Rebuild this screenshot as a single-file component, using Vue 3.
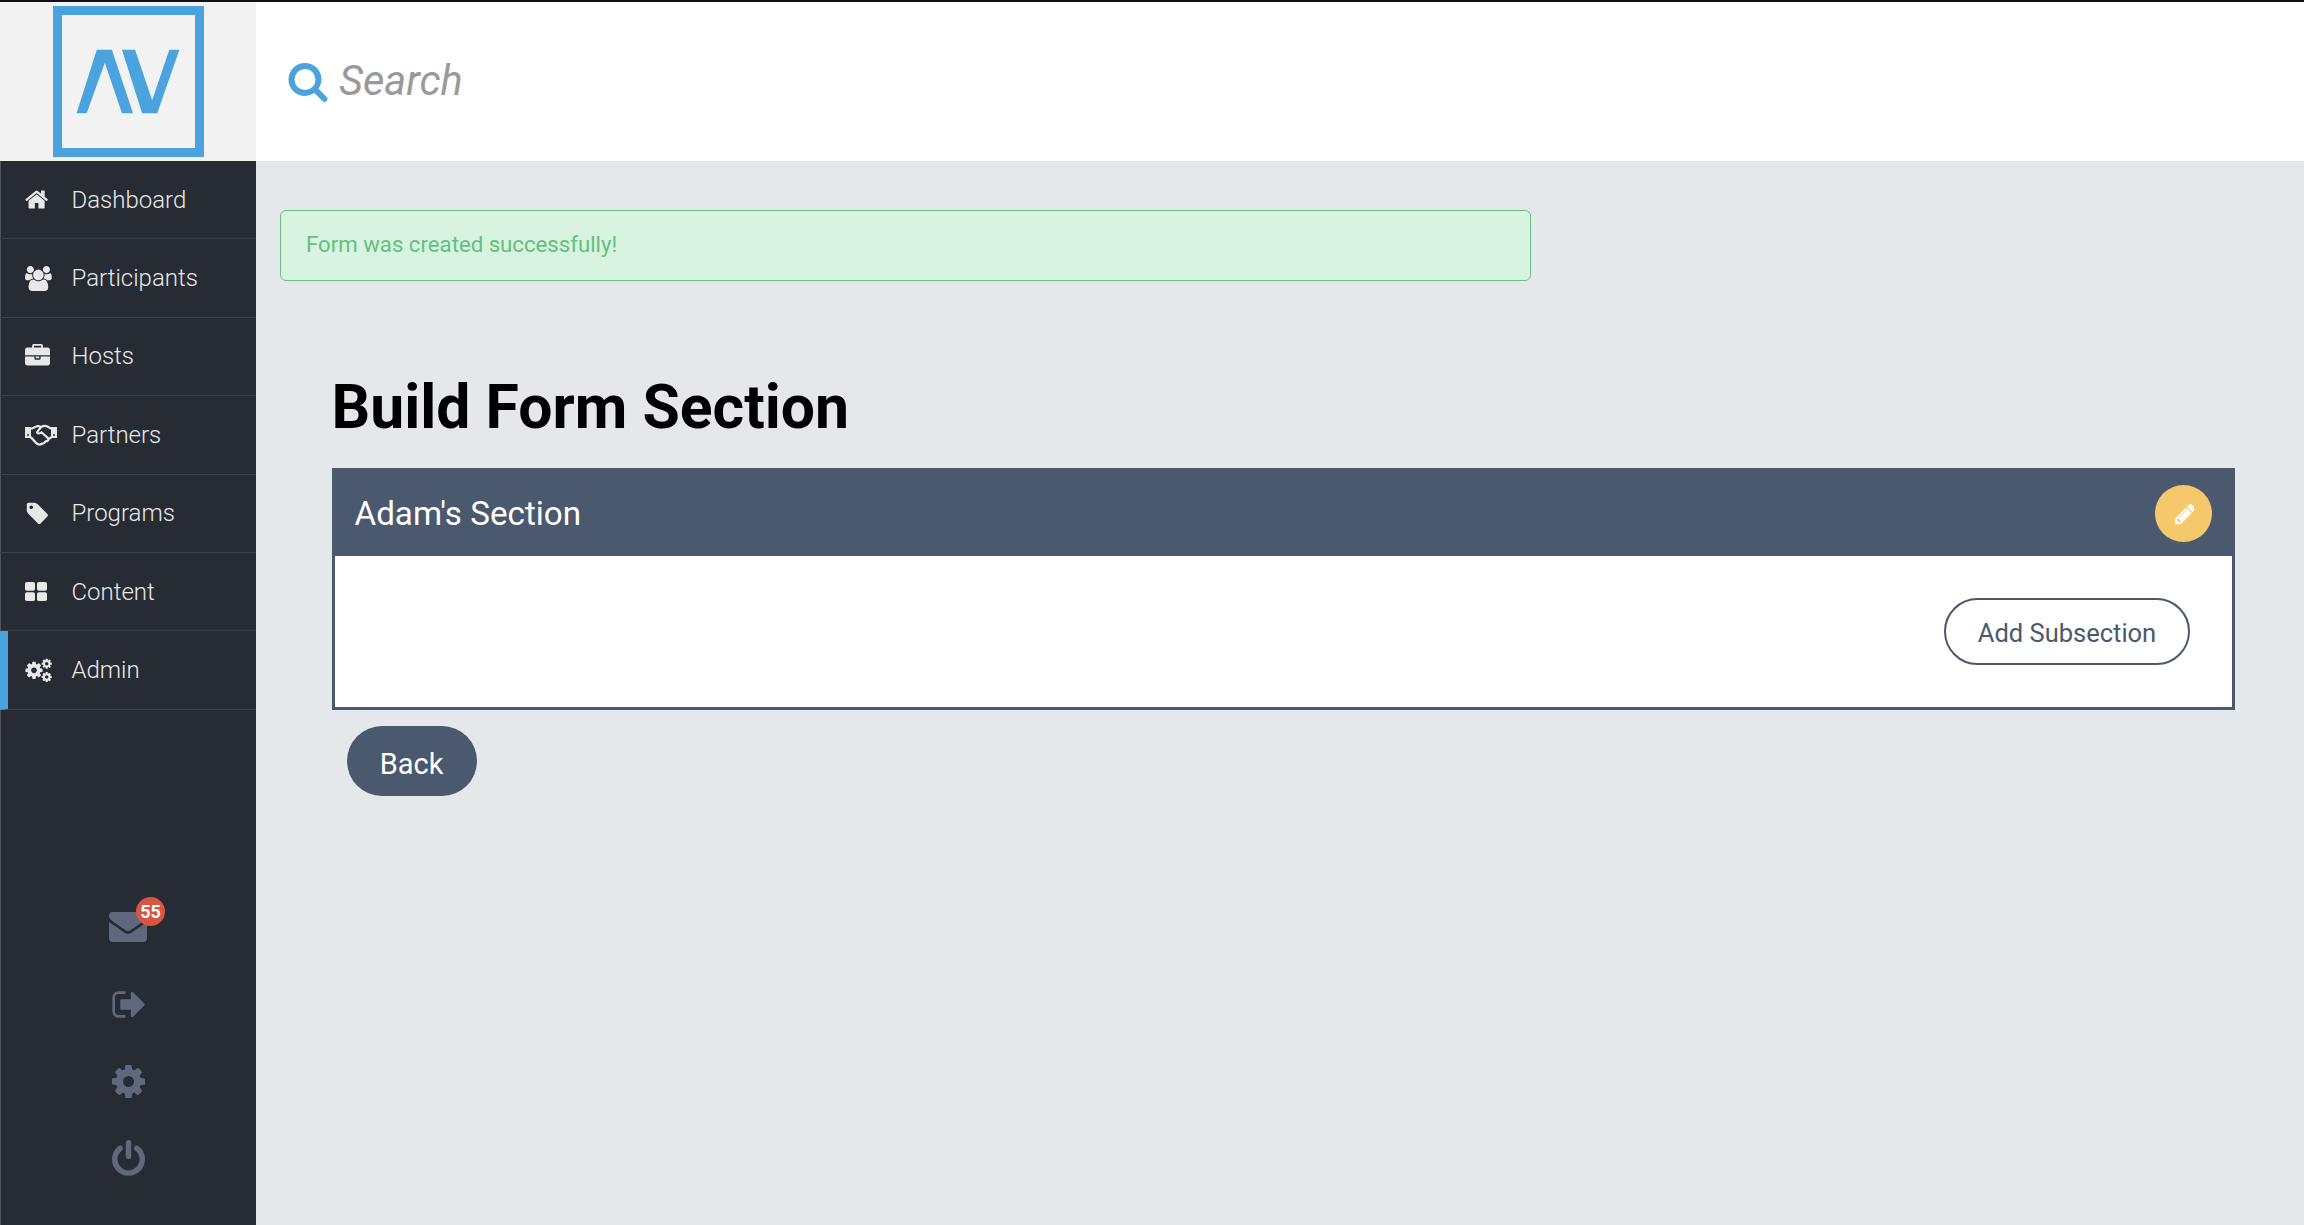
<script setup>
const icon = {
  home: { w: 1792, d: 'M1408 992v480q0 26-19 45t-45 19h-384v-384h-256v384h-384q-26 0-45-19t-19-45v-480q0-1 .5-3t.5-3l575-474 575 474q1 2 1 6zm223-69l-62 74q-8 9-21 11h-3q-13 0-21-7l-692-577-692 577q-12 8-24 7-13-2-21-11l-62-74q-8-10-7-23.5t11-21.5l719-599q32-26 76-26t76 26l244 204v-195q0-14 9-23t23-9h192q14 0 23 9t9 23v408l219 182q10 8 11 21.5t-7 23.5z' },
  users: { w: 1920, d: 'M593 896q-162 5-265 128h-134q-82 0-138-40.5t-56-118.5q0-353 124-353 6 0 43.5 21t97.5 42.5 119 21.5q67 0 133-23-5 37-5 66 0 139 81 256zm1071 637q0 120-73 189.5t-194 69.5h-874q-121 0-194-69.5t-73-189.5q0-53 3.5-103.5t14-109 26.5-108.5 43-97.5 62-81 85.5-53.5 111.5-20q10 0 43 21.5t73 48 107 48 135 21.5 135-21.5 107-48 73-48 43-21.5q61 0 111.5 20t85.5 53.5 62 81 43 97.5 26.5 108.5 14 109 3.5 103.5zm-1024-1277q0 106-75 181t-181 75-181-75-75-181 75-181 181-75 181 75 75 181zm704 384q0 159-112.5 271.5t-271.5 112.5-271.5-112.5-112.5-271.5 112.5-271.5 271.5-112.5 271.5 112.5 112.5 271.5zm576 225q0 78-56 118.5t-138 40.5h-134q-103-123-265-128 81-117 81-256 0-29-5-66 66 23 133 23 59 0 119-21.5t97.5-42.5 43.5-21q124 0 124 353zm-128-609q0 106-75 181t-181 75-181-75-75-181 75-181 181-75 181 75 75 181z' },
  briefcase: { w: 1792, d: 'M640 256h512v-128h-512v128zm1152 640v480q0 66-47 113t-113 47h-1472q-66 0-113-47t-47-113v-480h672v160q0 26 19 45t45 19h320q26 0 45-19t19-45v-160h672zm-768 0v128h-256v-128h256zm768-480v384h-1792v-384q0-66 47-113t113-47h352v-160q0-40 28-68t68-28h576q40 0 68 28t28 68v160h352q66 0 113 47t47 113z' },
  tag: { w: 1792, d: 'M576 448q0-53-37.5-90.5t-90.5-37.5-90.5 37.5-37.5 90.5 37.5 90.5 90.5 37.5 90.5-37.5 37.5-90.5zm1067 576q0 53-37 90l-491 492q-39 37-91 37-53 0-90-37l-715-716q-38-37-64.5-101t-26.5-117v-416q0-52 38-90t90-38h416q53 0 117 26.5t102 64.5l715 714q37 39 37 91z' }
}
const cog = 'M1152 896q0-106-75-181t-181-75-181 75-75 181 75 181 181 75 181-75 75-181zm512-109v222q0 12-8 23t-20 13l-185 28q-19 54-39 91 35 50 107 138 10 12 10 25t-9 23q-27 37-99 108t-94 71q-12 0-26-9l-138-108q-44 23-91 38-16 136-29 186-7 28-36 28h-222q-14 0-24.5-8.5t-11.5-21.5l-28-184q-49-16-90-37l-141 107q-10 9-25 9-14 0-25-11-126-114-165-168-7-10-7-23 0-12 8-23 15-21 51-66.5t54-70.5q-27-50-41-99l-183-27q-13-2-21-12.5t-8-23.5v-222q0-12 8-23t19-13l186-28q14-46 39-92-40-57-107-138-10-12-10-24 0-10 9-23 26-36 98.5-107.5t94.5-71.5q13 0 26 10l138 107q44-23 91-38 16-136 29-186 7-28 36-28h222q14 0 24.5 8.5t11.5 21.5l28 184q49 16 90 37l142-107q9-9 24-9 13 0 25 10 129 119 165 170 7 8 7 22 0 12-8 23-15 21-51 66.5t-54 70.5q26 50 41 98l183 28q13 2 21 12.5t8 23.5z'
const nav = [
  { label: 'Dashboard', icon: 'home' },
  { label: 'Participants', icon: 'users' },
  { label: 'Hosts', icon: 'briefcase' },
  { label: 'Partners', icon: 'hands' },
  { label: 'Programs', icon: 'tag' },
  { label: 'Content', icon: 'grid' },
  { label: 'Admin', icon: 'cogs', active: true }
]
</script>

<template>
  <div class="page">
    <aside class="side">
      <div class="logo">
        <div class="logo-box">
          <svg viewBox="0 0 132 132" class="logo-av">
            <path d="M14.5 97.5 34.5 34.5H49.5L70.5 97.5H59.5L42.5 47.5 24.5 97.5Z" />
            <path d="M59.5 34.5H72.5L89.5 84.5 106.5 34.5H116.5L94.5 97.5H79.5Z" />
          </svg>
        </div>
      </div>
      <nav class="nav">
        <a v-for="n in nav" :key="n.label" class="nav-row" :class="{ active: n.active }">
          <span class="nav-icon">
            <svg v-if="icon[n.icon]" class="ni" :viewBox="`0 0 ${icon[n.icon].w} 1792`"><path :d="icon[n.icon].d" /></svg>
            <svg v-else-if="n.icon === 'hands'" class="ni hands" viewBox="0 0 32 22">
              <path d="M0 3H6V14H0ZM26 3H32V14H26Z" />
              <path class="line" d="M6 4.5C8 4.5 9.5 2.8 12 2.2 14 1.8 15.5 2.6 16 3.2 18 1.8 21 1.8 23 2.8 24 3.4 25 4.5 26 4.5M6 13.5C8 15 10 18.5 12.5 20 14.5 21.2 16 20.5 17 19.6 19 19.8 20 18.5 20.6 17.4 22.4 17.2 23.6 16 23.8 14.8L26 13.5M16 3.2C14 5.5 12.5 7 12 8.4 13 10 15 9.6 16.5 8.2L23.5 14.6" />
              <circle class="dot" cx="3" cy="11" r="1" />
              <circle class="dot" cx="29" cy="11" r="1" />
            </svg>
            <svg v-else-if="n.icon === 'grid'" class="ni grid" viewBox="0 0 22 19">
              <rect width="10" height="8.7" rx="1.8" />
              <rect x="12" width="10" height="8.7" rx="1.8" />
              <rect y="10.3" width="10" height="8.7" rx="1.8" />
              <rect x="12" y="10.3" width="10" height="8.7" rx="1.8" />
            </svg>
            <svg v-else class="ni cogs" viewBox="0 0 28 26">
              <path :d="cog" transform="translate(10 13.3) scale(.0112) translate(-896 -896)" />
              <path :d="cog" transform="translate(22.7 6.7) scale(.0066) translate(-896 -896)" />
              <path :d="cog" transform="translate(22.7 20) scale(.0066) translate(-896 -896)" />
            </svg>
          </span>
          <span>{{ n.label }}</span>
        </a>
      </nav>
      <div class="tools">
        <div class="tool mail">
          <svg class="ti t-mail" viewBox="0 64 1792 1792"><path d="M1792 710v794q0 66-47 113t-113 47h-1472q-66 0-113-47t-47-113v-794q44 49 101 87 362 246 497 345 57 42 92.5 65.5t94.5 48 110 24.5h2q51 0 110-24.5t94.5-48 92.5-65.5q170-123 498-345 57-39 100-87zm0-294q0 79-49 151t-122 123q-376 261-468 325-10 7-42.5 30.5t-54 38-52 32.5-57.5 27-50 9h-2q-23 0-50-9t-57.5-27-52-32.5-54-38-42.5-30.5q-91-64-262-182.5t-205-142.5q-62-42-117-115.5t-55-136.5q0-78 41.5-130t118.5-52h1472q65 0 112.5 47t47.5 113z" /></svg>
          <span class="badge">55</span>
        </div>
        <div class="tool">
          <svg class="ti t-out" viewBox="0 0 1664 1792"><path d="M704 1440q0 4 1 20t.5 26.5-3 23.5-10 19.5-20.5 6.5h-320q-119 0-203.5-84.5t-84.5-203.5v-704q0-119 84.5-203.5t203.5-84.5h320q13 0 22.5 9.5t9.5 22.5q0 4 1 20t.5 26.5-3 23.5-10 19.5-20.5 6.5h-320q-66 0-113 47t-47 113v704q0 66 47 113t113 47h312l11.5 1 11.5 3 8 5.5 7 9 2 13.5zm928-544q0 26-19 45l-544 544q-19 19-45 19t-45-19-19-45v-288h-448q-26 0-45-19t-19-45v-384q0-26 19-45t45-19h448v-288q0-26 19-45t45-19 45 19l544 544q19 19 19 45z" /></svg>
        </div>
        <div class="tool">
          <svg class="ti t-cog" viewBox="128 128 1536 1536"><path :d="cog" /></svg>
        </div>
        <div class="tool">
          <svg class="ti t-pow" viewBox="128 0 1536 1792"><path d="M1664 896q0 156-61 298t-164 245-245 164-298 61-298-61-245-164-164-245-61-298q0-182 80.5-343t226.5-270q43-32 95.5-25t83.5 50q32 42 24.5 94.5t-49.5 84.5q-98 74-151.5 181t-53.5 228q0 104 40.5 198.5t109.5 163.5 163.5 109.5 198.5 40.5 198.5-40.5 163.5-109.5 109.5-163.5 40.5-198.5q0-121-53.5-228t-151.5-181q-42-32-49.5-84.5t24.5-94.5q31-43 84-50t95 25q146 109 226.5 270t80.5 343zm-640-768v640q0 52-38 90t-90 38-90-38-38-90v-640q0-52 38-90t90-38 90 38 38 90z" /></svg>
        </div>
      </div>
    </aside>
    <div class="right">
      <header class="top">
        <svg class="search-i" viewBox="0 0 1792 1792"><path d="M1216 832q0-185-131.5-316.5t-316.5-131.5-316.5 131.5-131.5 316.5 131.5 316.5 316.5 131.5 316.5-131.5 131.5-316.5zm512 832q0 52-38 90t-90 38q-54 0-90-38l-343-342q-179 124-399 124-143 0-273.5-55.5t-225-150-150-225-55.5-273.5 55.5-273.5 150-225 225-150 273.5-55.5 273.5 55.5 225 150 150 225 55.5 273.5q0 220-124 399l343 343q37 37 37 90z" /></svg>
        <span class="search-t">Search</span>
      </header>
      <main class="main">
        <div class="alert">Form was created successfully!</div>
        <section class="content">
          <h1>Build Form Section</h1>
          <div class="card">
            <div class="card-head">
              <span>Adam's Section</span>
              <button class="edit">
                <svg viewBox="0 0 1536 1792"><path d="M491 1536l91-91-235-235-91 91v107h128v128h107zm523-928q0-22-22-22-10 0-17 7l-542 542q-7 7-7 17 0 22 22 22 10 0 17-7l542-542q7-7 7-17zm-54-192l416 416-832 832h-416v-416zm683 96q0 53-37 90l-166 166-416-416 166-165q36-38 90-38 53 0 91 38l235 234q37 39 37 91z" /></svg>
              </button>
            </div>
            <div class="card-body">
              <button class="add">Add Subsection</button>
            </div>
          </div>
          <button class="back">Back</button>
        </section>
      </main>
    </div>
  </div>
</template>

<style>
html, body { margin: 0; background: #e5e8eb; }
</style>

<style scoped>
.page {
  display: flex;
  height: 1225px;
  overflow: hidden;
  font-family: Roboto, "Liberation Sans", sans-serif;
  border-top: 2px solid #111;
  box-sizing: border-box;
}
.side {
  width: 256px;
  flex: none;
  display: flex;
  flex-direction: column;
  background: #272b34;
  box-shadow: inset 1px 0 #50545c;
}
.logo {
  height: 159px;
  flex: none;
  display: flex;
  align-items: center;
  justify-content: center;
  background: #f2f2f2;
  padding-bottom: 1px;
  box-sizing: border-box;
}
.logo-box {
  width: 151px;
  height: 151px;
  box-sizing: border-box;
  border: 9.5px solid #4aa3df;
}
.logo-av { display: block; width: 100%; height: 100%; }
.logo-av path { fill: #4aa3df; }
.nav { display: flex; flex-direction: column; }
.nav-row {
  height: 78.4px;
  box-sizing: border-box;
  display: flex;
  align-items: center;
  padding-left: 25px;
  border-bottom: 1.5px solid #3c414b;
  color: #e8e8e8;
  font-size: 24px;
  font-weight: 300;
}
.nav-row.active { border-left: 8px solid #4aa3df; padding-left: 17px; }
.nav-icon { width: 46.5px; flex: none; display: flex; }
.ni { height: 25px; fill: #e8e8e8; display: block; }
.ni.hands { height: 22px; width: 32px; }
.ni.grid { height: 19px; width: 22px; }
.ni.cogs { height: 26px; width: 28px; margin-left: -1px; }
.hands .line { fill: none; stroke: #e8e8e8; stroke-width: 2.2; stroke-linejoin: round; stroke-linecap: round; }
.hands .dot { fill: #272b34; }
.tools {
  display: flex;
  flex-direction: column;
  align-items: center;
  margin-top: 178px;
}
.tool {
  position: relative;
  height: 77.6px;
  display: flex;
  align-items: center;
  justify-content: center;
}
.ti { fill: #5e697e; display: block; }
.t-mail { width: 38px; height: 38px; }
.t-out { width: 34.4px; height: 37px; }
.t-cog { width: 33px; height: 33px; }
.t-pow { width: 33px; height: 38.5px; }
.badge {
  position: absolute;
  top: 9px;
  left: 27px;
  width: 29px;
  height: 29px;
  border-radius: 50%;
  background: #d8553f;
  color: #fff;
  font-size: 18px;
  font-weight: 700;
  display: flex;
  align-items: center;
  justify-content: center;
}
.right { flex: 1; min-width: 0; display: flex; flex-direction: column; }
.top {
  height: 159px;
  flex: none;
  box-sizing: border-box;
  background: #fff;
  display: flex;
  align-items: center;
  padding-left: 31px;
  padding-bottom: 2px;
}
.search-i { width: 42px; height: 42px; fill: #4aa3df; margin-right: 10px; }
.search-t { font-size: 41.5px; font-style: italic; color: #999; }
.main { flex: 1; padding: 49px 0 0 24px; }
.alert {
  width: 1251px;
  height: 71px;
  box-sizing: border-box;
  display: flex;
  align-items: center;
  padding: 0 0 3px 25px;
  background: #d8f3e0;
  border: 1.5px solid #66c283;
  border-radius: 6px;
  color: #62c17f;
  font-size: 22.2px;
}
.content { padding: 0 69px 0 51.5px; }
h1 {
  margin: 76px 0 0;
  height: 111px;
  font-size: 60.7px;
  line-height: 102px;
  font-weight: 700;
  color: #000;
}
.card { border: 3px solid #4a596d; background: #fff; }
.card-head {
  height: 85px;
  background: #4a596d;
  display: flex;
  align-items: center;
  justify-content: space-between;
  padding: 0 20px;
  color: #fff;
  font-size: 33.2px;
}
.edit {
  width: 57px;
  height: 57px;
  padding: 0;
  border: none;
  border-radius: 50%;
  background: #f5c96b;
  display: flex;
  align-items: center;
  justify-content: center;
}
.edit svg { width: 21px; height: 24px; fill: #fff; }
.card-body {
  height: 151px;
  display: flex;
  align-items: center;
  justify-content: flex-end;
  padding-right: 42px;
}
.add {
  width: 246px;
  height: 67px;
  border: 2px solid #4a596d;
  border-radius: 34px;
  background: #fff;
  color: #4a596d;
  font: 400 25.5px Roboto, sans-serif;
  padding: 2px 0 0;
}
.back {
  display: block;
  width: 130px;
  height: 70px;
  margin: 16px 0 0 15px;
  border: none;
  border-radius: 35px;
  background: #4a596d;
  color: #fff;
  font: 400 29px Roboto, sans-serif;
  padding: 5px 0 0;
}
</style>
